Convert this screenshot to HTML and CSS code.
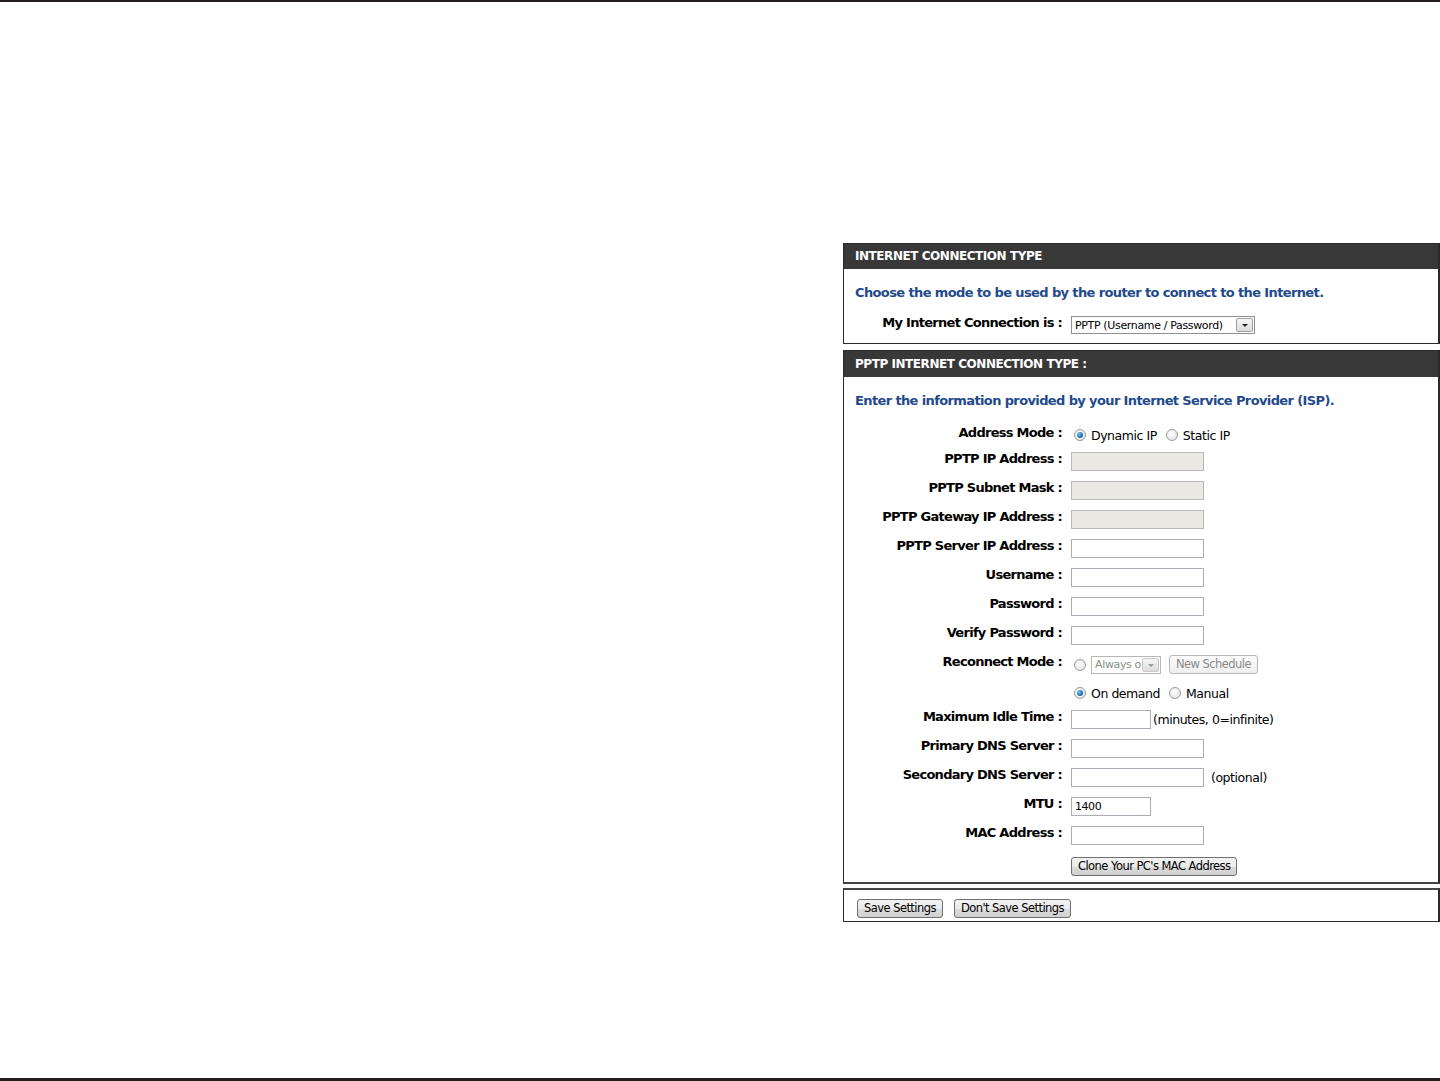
FILE: index.html
```html
<!DOCTYPE html>
<html lang="en">
<head>
  <meta charset="UTF-8">
  <title>PPTP Setup</title>
  <link rel="stylesheet" href="styles.css">
</head>
<body>

<div class="rule-top"></div>

<div class="page">
  <div class="settings">

    <div class="box box-type">
      <div class="box-head">INTERNET CONNECTION TYPE</div>
      <div class="box-body">
        <p class="intro">Choose the mode to be used by the router to connect to the Internet.</p>
        <div class="row row-conn">
          <label>My Internet Connection is :</label>
          <div class="field">
            <span class="select select-wide">PPTP (Username / Password)<span class="arrow"></span></span>
          </div>
        </div>
      </div>
    </div>

    <div class="box box-pptp">
      <div class="box-head">PPTP INTERNET CONNECTION TYPE :</div>
      <div class="box-body">
        <p class="intro">Enter the information provided by your Internet Service Provider (ISP).</p>
        <div class="form">
          <div class="row row-mode">
            <label>Address Mode :</label>
            <div class="field">
              <span class="radio checked"></span><span class="opt">Dynamic IP</span>
              <span class="radio"></span><span class="opt">Static IP</span>
            </div>
          </div>
          <div class="row"><label>PPTP IP Address :</label><div class="field"><span class="input disabled"></span></div></div>
          <div class="row"><label>PPTP Subnet Mask :</label><div class="field"><span class="input disabled"></span></div></div>
          <div class="row"><label>PPTP Gateway IP Address :</label><div class="field"><span class="input disabled"></span></div></div>
          <div class="row"><label>PPTP Server IP Address :</label><div class="field"><span class="input"></span></div></div>
          <div class="row"><label>Username :</label><div class="field"><span class="input"></span></div></div>
          <div class="row"><label>Password :</label><div class="field"><span class="input"></span></div></div>
          <div class="row"><label>Verify Password :</label><div class="field"><span class="input"></span></div></div>
          <div class="row">
            <label>Reconnect Mode :</label>
            <div class="field">
              <span class="radio"></span>
              <span class="select select-small faded">Always o<span class="arrow"></span></span>
              <span class="btn faded">New Schedule</span>
            </div>
          </div>
          <div class="row row-sub">
            <label></label>
            <div class="field">
              <span class="radio checked"></span><span class="opt">On demand</span>
              <span class="radio"></span><span class="opt">Manual</span>
            </div>
          </div>
          <div class="row">
            <label>Maximum Idle Time :</label>
            <div class="field"><span class="input input-short"></span><span class="note">(minutes, 0=infinite)</span></div>
          </div>
          <div class="row"><label>Primary DNS Server :</label><div class="field"><span class="input"></span></div></div>
          <div class="row"><label>Secondary DNS Server :</label><div class="field"><span class="input"></span><span class="note note-gap">(optional)</span></div></div>
          <div class="row"><label>MTU :</label><div class="field"><span class="input input-short">1400</span></div></div>
          <div class="row"><label>MAC Address :</label><div class="field"><span class="input"></span></div></div>
          <div class="row row-clone"><label></label><div class="field"><span class="btn">Clone Your PC's MAC Address</span></div></div>
        </div>
      </div>
    </div>

    <div class="box box-actions">
      <span class="btn">Save Settings</span>
      <span class="btn">Don't Save Settings</span>
    </div>

  </div>
</div>

<div class="rule-bottom"></div>

</body>
</html>
```

FILE: styles.css
```css
* { box-sizing: border-box; }

html, body {
  margin: 0;
}

body {
  background: #fff;
  font-family: Tahoma, "DejaVu Sans", sans-serif;
  color: #000;
  display: flex;
  flex-direction: column;
  height: 1081px;
  overflow: hidden;
}

.rule-top {
  height: 2px;
  background: #231f20;
}

.rule-bottom {
  height: 3px;
  background: #231f20;
  margin-top: auto;
}

.page {
  padding: 241px 0 0 843px;
}

.settings {
  width: 597px;
}

.box {
  border: 1px solid #2a2a2a;
  border-right-width: 2px;
  background: #fff;
}

.box-head {
  background: #383838;
  color: #fff;
  font-weight: bold;
  font-size: 12px;
  letter-spacing: -0.45px;
  height: 25px;
  line-height: 25px;
  padding-left: 11px;
}

.box-body {
  padding: 0 10px 0 11px;
}

.intro {
  margin: 0;
  padding-top: 16px;
  height: 42px;
  color: #1f4a8c;
  font-weight: bold;
  font-size: 13px;
  letter-spacing: -0.62px;
}

.row {
  display: flex;
  align-items: center;
  height: 29px;
}

.row label {
  width: 208px;
  text-align: right;
  font-weight: bold;
  font-size: 13px;
  letter-spacing: -0.72px;
  padding-right: 1px;
}

.field {
  display: flex;
  align-items: center;
  margin-top: 6px;
  padding-left: 8px;
  font-size: 12.5px;
  letter-spacing: -0.45px;
}

/* first box */
.row-conn {
  height: 22px;
  margin-bottom: 10px;
}

/* second box */
.box-pptp {
  margin-top: 6px;
  border-bottom: 2px solid #444;
}

.box-pptp .box-head {
  height: 26px;
  line-height: 26px;
}

.box-pptp .intro {
  height: 43px;
}

.row-mode {
  height: 24px;
}

.row-sub {
  height: 26px;
  padding-top: 2px;
}

.row-clone {
  height: 32px;
}

.form {
  padding-bottom: 3px;
}

.input {
  display: inline-block;
  width: 133px;
  height: 19px;
  border: 1px solid #a9aeb5;
  background: #fff;
  font-size: 11px;
  line-height: 17px;
  padding-left: 3px;
}

.input.disabled {
  background: #eae8e2;
  border-color: #b8b8b6;
}

.input-short {
  width: 80px;
}

.note {
  padding-left: 2px;
}

.note-gap {
  padding-left: 7px;
}

.radio {
  display: inline-block;
  width: 12px;
  height: 12px;
  border-radius: 50%;
  border: 1px solid #9a9a9a;
  background: radial-gradient(circle at 40% 40%, #fff 0, #e8e8e8 70%, #d0d0d0 100%);
  margin: 0 5px 0 3px;
  position: relative;
}

.radio.checked::after {
  content: "";
  position: absolute;
  left: 2px;
  top: 2px;
  width: 6px;
  height: 6px;
  border-radius: 50%;
  background: radial-gradient(circle at 35% 35%, #7fc3f0 0, #1f6fb5 60%, #0e4f8f 100%);
}

.opt {
  margin-right: 6px;
}

.select {
  display: inline-flex;
  align-items: center;
  justify-content: space-between;
  height: 18px;
  border: 1px solid #8e8f8f;
  font-size: 11px;
  letter-spacing: -0.35px;
  padding-left: 3px;
  background: #fff;
  white-space: nowrap;
  overflow: hidden;
}

.select-wide {
  width: 184px;
}

.select-small {
  width: 70px;
}

.arrow {
  flex: none;
  width: 17px;
  height: 14px;
  margin-right: 1px;
  border: 1px solid #a0a0a0;
  border-radius: 2px;
  background: linear-gradient(#f6f6f6, #dcdcdc);
  position: relative;
}

.arrow::after {
  content: "";
  position: absolute;
  left: 5px;
  top: 5px;
  border-left: 3px solid transparent;
  border-right: 3px solid transparent;
  border-top: 3px solid #222;
}

.btn {
  display: inline-block;
  height: 19px;
  line-height: 17px;
  padding: 0 6px;
  border: 1px solid #707070;
  border-radius: 3px;
  background: linear-gradient(#f2f2f2 0, #ebebeb 50%, #dddddd 51%, #cfcfcf 100%);
  font-size: 11.5px;
  letter-spacing: -0.55px;
  color: #000;
  white-space: nowrap;
}

.faded {
  color: #8a8a8a;
  border-color: #b8b8b8;
}

.faded .arrow {
  border-color: #c8c8c8;
}

.faded .arrow::after {
  border-top-color: #999;
}

.btn.faded {
  margin-left: 8px;
  background: linear-gradient(#fbfbfb, #efefef);
}

/* third box */
.box-actions {
  margin-top: 4px;
  border-top: 2px solid #444;
  height: 34px;
  display: flex;
  align-items: center;
  gap: 11px;
  padding: 5px 0 0 13px;
}
```
